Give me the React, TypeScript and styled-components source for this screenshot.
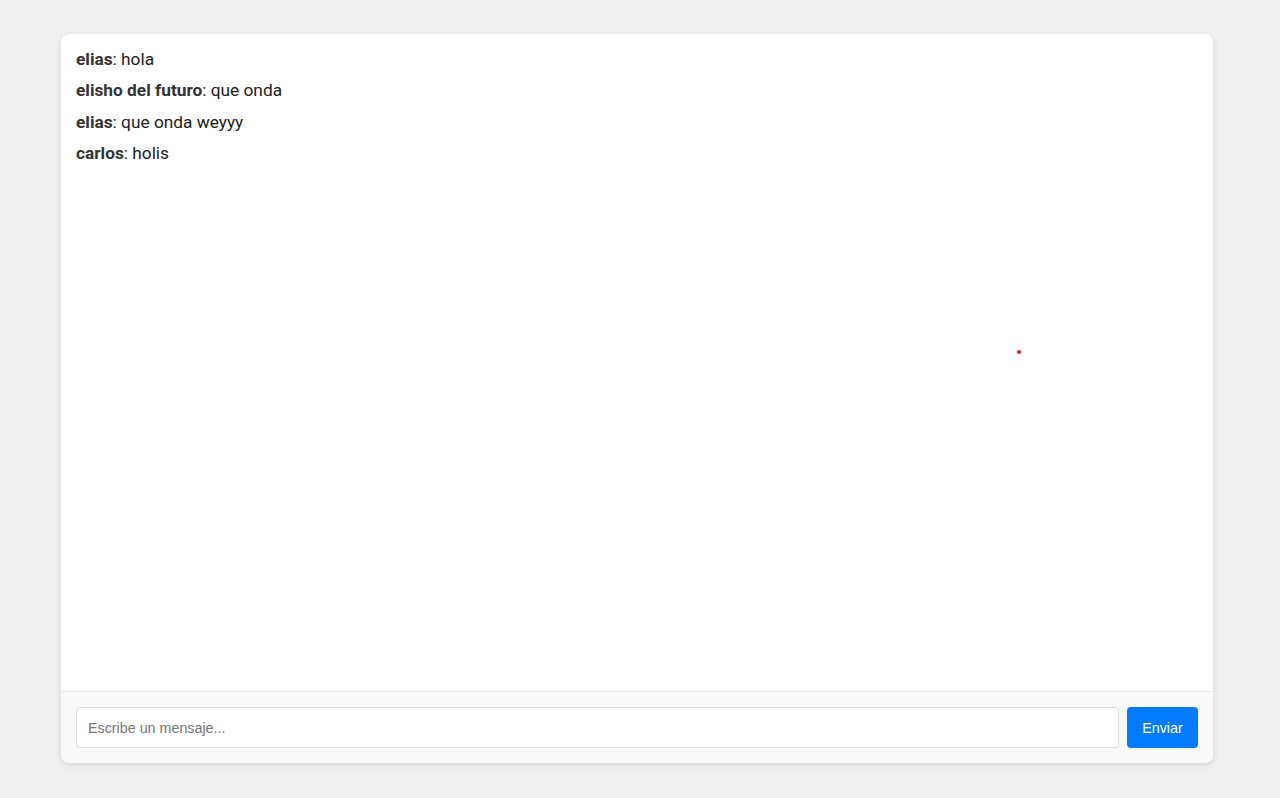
import React from "react";
import styled, { createGlobalStyle } from "styled-components";

const Global = createGlobalStyle`
  html, body { margin: 0; padding: 0; background: #f0f0f0; }
  body { font-family: Roboto, "Liberation Sans", Arial, sans-serif; }
  * { box-sizing: border-box; }
`;

const Page = styled.div`
  display: flex;
  padding: 34px 0 0 61px;
  height: 798px;
`;

const Card = styled.div`
  position: relative;
  width: 1152px;
  height: 729px;
  background: #fff;
  border-radius: 8px;
  box-shadow: 0 2px 6px rgba(0, 0, 0, 0.12);
  display: flex;
  flex-direction: column;
  overflow: hidden;
`;

const Messages = styled.div`
  flex: 1;
  padding: 15px 15px;
  display: flex;
  flex-direction: column;
`;

const Message = styled.div`
  font-size: 17.3px;
  line-height: 20px;
  color: #1c1c1c;
  margin-bottom: 11.33px;
`;

const Name = styled.strong`
  font-weight: 700;
  color: #333;
`;

const InputBar = styled.form`
  display: flex;
  gap: 8px;
  padding: 15px;
  background: #f9f9f9;
  border-top: 1px solid #eaeaea;
`;

const Input = styled.input`
  flex: 1;
  height: 41px;
  padding: 0 11px;
  border: 1px solid #dddddd;
  border-radius: 4px;
  background: #fff;
  font-family: "Liberation Sans", Arial, sans-serif;
  font-size: 14.3px;
  outline: none;
  &::placeholder { color: #767676; }
`;

const Button = styled.button`
  width: 71px;
  height: 41px;
  border: none;
  border-radius: 4px;
  background: #007bff;
  color: #fff;
  font-family: "Liberation Sans", Arial, sans-serif;
  font-size: 14.3px;
  cursor: pointer;
`;

const Dot = styled.span`
  position: absolute;
  left: 956px;
  top: 316px;
  width: 4px;
  height: 4px;
  border-radius: 50%;
  background: #e3202a;
`;

const messages = [
  { user: "elias", text: "hola" },
  { user: "elisho del futuro", text: "que onda" },
  { user: "elias", text: "que onda weyyy" },
  { user: "carlos", text: "holis" },
];

export default function App() {
  return (
    <>
      <Global />
      <Page>
        <Card>
          <Messages>
            {messages.map((m, i) => (
              <Message key={i}>
                <Name>{m.user}</Name>: {m.text}
              </Message>
            ))}
          </Messages>
          <InputBar onSubmit={(e) => e.preventDefault()}>
            <Input placeholder="Escribe un mensaje..." />
            <Button type="submit">Enviar</Button>
          </InputBar>
          <Dot />
        </Card>
      </Page>
    </>
  );
}
